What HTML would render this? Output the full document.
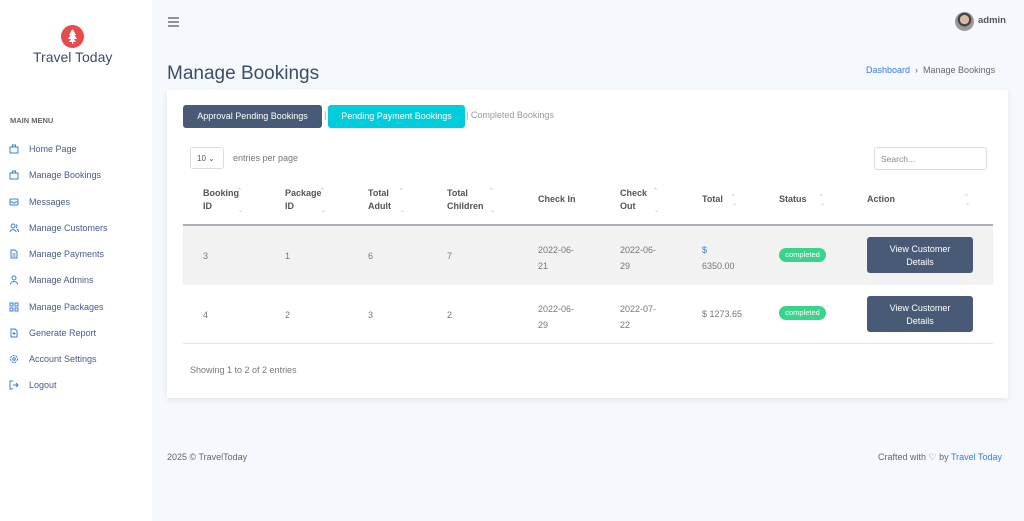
<!DOCTYPE html>
<html><head><meta charset="utf-8"><style>
*{margin:0;padding:0;box-sizing:border-box}
body{width:1024px;height:521px;overflow:hidden;background:#f5f8fd;font-family:"Liberation Sans",sans-serif;position:relative;color:#6c757d}
.a{position:absolute;white-space:nowrap}
#sb{position:absolute;left:0;top:0;width:152px;height:521px;background:#fff}
.mi{position:absolute;left:9px;font-size:9px;color:#4a5a8a}
.mi svg{position:absolute;left:0;top:0}
.mi span{position:absolute;left:20px;top:0}
.th{font-size:9px;color:#555;font-weight:bold;line-height:13px}
.td{font-size:9px;color:#777}
.btn{background:#485a76;color:#fff;font-size:9px;text-align:center;border-radius:3px;line-height:13px;padding-top:6px}
.badge{background:#3ad38c;color:#fff;font-size:7.5px;border-radius:7px;width:47px;height:14px;text-align:center;line-height:14px}
.s{position:absolute;font-size:6px;color:#bbb;line-height:6px}
</style></head><body>
<div id="sb">
 <div class="a" style="left:61px;top:25px;width:23px;height:23px;border-radius:50%;background:#e84b4b"></div>
 <svg class="a" style="left:66px;top:28px" width="13" height="17" viewBox="0 0 13 17"><path d="M6.5 1 L10 7 H8.5 L11 11 H8 L10 14 H3 L5 11 H2 L4.5 7 H3 Z" fill="#fff"/><rect x="6" y="13" width="1.2" height="3" fill="#fff"/></svg>
 <div class="a" style="left:33px;top:49px;font-size:14px;color:#3d4d66">Travel Today</div>
 <div class="a" style="left:10px;top:116px;font-size:7.5px;color:#666;font-weight:bold">MAIN MENU</div>
 <div class="mi a" style="top:144px"><svg width="10" height="10"><rect x="1" y="3" width="8" height="6" fill="none" stroke="#3b7ddd"/><rect x="3.5" y="1" width="3" height="2" fill="none" stroke="#3b7ddd"/></svg><span>Home Page</span></div>
 <div class="mi a" style="top:170px"><svg width="10" height="10"><rect x="1" y="3" width="8" height="6" fill="none" stroke="#3b7ddd"/><rect x="3.5" y="1" width="3" height="2" fill="none" stroke="#3b7ddd"/></svg><span>Manage Bookings</span></div>
 <div class="mi a" style="top:197px"><svg width="10" height="10"><rect x="1" y="2" width="8" height="6" rx="1" fill="none" stroke="#3b7ddd"/><path d="M1 5h2.5l1 1h1l1-1H9" fill="none" stroke="#3b7ddd"/></svg><span>Messages</span></div>
 <div class="mi a" style="top:223px"><svg width="10" height="10"><circle cx="4" cy="3" r="2" fill="none" stroke="#3b7ddd"/><path d="M1 9c0-3 6-3 6 0M7 1.5a2 2 0 010 3.5M8 6c1 .5 1.5 1.5 1.5 3" fill="none" stroke="#3b7ddd"/></svg><span>Manage Customers</span></div>
 <div class="mi a" style="top:249px"><svg width="10" height="10"><path d="M2 1h4l2 2v6H2z M3.5 5h3M3.5 7h3" fill="none" stroke="#3b7ddd"/></svg><span>Manage Payments</span></div>
 <div class="mi a" style="top:275px"><svg width="10" height="10"><circle cx="5" cy="3" r="2" fill="none" stroke="#3b7ddd"/><path d="M1.5 9.5c0-4 7-4 7 0" fill="none" stroke="#3b7ddd"/></svg><span>Manage Admins</span></div>
 <div class="mi a" style="top:302px"><svg width="10" height="10"><rect x="1" y="1" width="3" height="3" fill="none" stroke="#3b7ddd"/><rect x="6" y="1" width="3" height="3" fill="none" stroke="#3b7ddd"/><rect x="1" y="6" width="3" height="3" fill="none" stroke="#3b7ddd"/><rect x="6" y="6" width="3" height="3" fill="none" stroke="#3b7ddd"/></svg><span>Manage Packages</span></div>
 <div class="mi a" style="top:328px"><svg width="10" height="10"><path d="M2 1h4l2 2v6H2z M5 4v3M3.5 5.5h3" fill="none" stroke="#3b7ddd"/></svg><span>Generate Report</span></div>
 <div class="mi a" style="top:354px"><svg width="10" height="10"><circle cx="5" cy="5" r="3.5" fill="none" stroke="#3b7ddd" stroke-dasharray="2 1"/><circle cx="5" cy="5" r="1.3" fill="none" stroke="#3b7ddd"/></svg><span>Account Settings</span></div>
 <div class="mi a" style="top:380px"><svg width="10" height="10"><path d="M4 1H1v8h3M4 5h5M7 3l2 2-2 2" fill="none" stroke="#3b7ddd"/></svg><span>Logout</span></div>
</div>
<svg class="a" style="left:168px;top:17px" width="12" height="10"><path d="M0 1h11M0 5h11M0 9h11" stroke="#555" stroke-width="1.2"/></svg>
<div class="a" style="left:955px;top:12px;width:19px;height:19px;border-radius:50%;background:radial-gradient(circle at 50% 40%,#d8b8a0 0 30%,#444 32% 45%,#999 47%)"></div>
<div class="a" style="left:978px;top:15px;font-size:9.5px;font-weight:bold;color:#555">admin</div>
<div class="a" style="left:167px;top:63px;font-size:19px;color:#3d4d66">Manage Bookings</div>
<div class="a" style="left:866px;top:65px;font-size:9px;color:#3b7ddd">Dashboard <span style="color:#666">&nbsp;›&nbsp; Manage Bookings</span></div>
<div class="a" style="left:167px;top:90px;width:841px;height:308px;background:#fff;box-shadow:0 2px 6px rgba(0,0,0,.08)"></div>
<div class="a btn" style="left:183px;top:105px;width:139px;height:23px;padding-top:5px">Approval Pending Bookings</div>
<div class="a" style="left:324px;top:110px;font-size:9px;color:#999">|</div>
<div class="a btn" style="left:328px;top:105px;width:137px;height:23px;padding-top:5px;background:#00ccdb">Pending Payment Bookings</div>
<div class="a" style="left:466px;top:110px;font-size:9px;color:#999">| Completed Bookings</div>
<div class="a" style="left:190px;top:147px;width:34px;height:22px;border:1px solid #ddd;border-radius:3px;font-size:8px;color:#555;padding:6px 0 0 6px">10 ⌄</div>
<div class="a" style="left:233px;top:153px;font-size:9px;color:#777">entries per page</div>
<div class="a" style="left:874px;top:147px;width:113px;height:23px;border:1px solid #ddd;border-radius:3px;font-size:8.5px;color:#888;padding:6px 0 0 6px">Search...</div>
<div class="a th" style="left:203px;top:187px">Booking<br>ID</div>
<div class="a th" style="left:285px;top:187px">Package<br>ID</div>
<div class="a th" style="left:368px;top:187px">Total<br>Adult</div>
<div class="a th" style="left:447px;top:187px">Total<br>Children</div>
<div class="a th" style="left:538px;top:193px">Check In</div>
<div class="a th" style="left:620px;top:187px">Check<br>Out</div>
<div class="a th" style="left:702px;top:193px">Total</div>
<div class="a th" style="left:779px;top:193px">Status</div>
<div class="a th" style="left:867px;top:193px">Action</div>
<div class="s" style="left:238px;top:188px">^</div><div class="s" style="left:238px;top:208px">⌄</div>
<div class="s" style="left:321px;top:188px">^</div><div class="s" style="left:321px;top:208px">⌄</div>
<div class="s" style="left:400px;top:188px">^</div><div class="s" style="left:400px;top:208px">⌄</div>
<div class="s" style="left:490px;top:188px">^</div><div class="s" style="left:490px;top:208px">⌄</div>
<div class="s" style="left:572px;top:194px">^</div><div class="s" style="left:572px;top:199px">⌄</div>
<div class="s" style="left:654px;top:188px">^</div><div class="s" style="left:654px;top:208px">⌄</div>
<div class="s" style="left:732px;top:194px">^</div><div class="s" style="left:732px;top:201px">⌄</div>
<div class="s" style="left:820px;top:194px">^</div><div class="s" style="left:820px;top:201px">⌄</div>
<div class="s" style="left:965px;top:194px">^</div><div class="s" style="left:965px;top:201px">⌄</div>
<div class="a" style="left:183px;top:224px;width:810px;height:2px;background:#aab0b8"></div>
<div class="a" style="left:183px;top:226px;width:810px;height:59px;background:#f2f2f2"></div>
<div class="a" style="left:183px;top:343px;width:810px;height:1px;background:#e5e5e5"></div>
<div class="a td" style="left:203px;top:251px">3</div><div class="a td" style="left:285px;top:251px">1</div><div class="a td" style="left:368px;top:251px">6</div><div class="a td" style="left:447px;top:251px">7</div>
<div class="a td" style="left:538px;top:242px;line-height:16px">2022-06-<br>21</div><div class="a td" style="left:620px;top:242px;line-height:16px">2022-06-<br>29</div>
<div class="a td" style="left:702px;top:242px;line-height:16px"><span style="color:#3b7ddd">$</span><br>6350.00</div>
<div class="a badge" style="left:779px;top:248px">completed</div>
<div class="a btn" style="left:867px;top:237px;width:106px;height:36px">View Customer<br>Details</div>
<div class="a td" style="left:203px;top:310px">4</div><div class="a td" style="left:285px;top:310px">2</div><div class="a td" style="left:368px;top:310px">3</div><div class="a td" style="left:447px;top:310px">2</div>
<div class="a td" style="left:538px;top:301px;line-height:16px">2022-06-<br>29</div><div class="a td" style="left:620px;top:301px;line-height:16px">2022-07-<br>22</div>
<div class="a td" style="left:702px;top:309px">$ 1273.65</div>
<div class="a badge" style="left:779px;top:306px">completed</div>
<div class="a btn" style="left:867px;top:296px;width:106px;height:36px">View Customer<br>Details</div>
<div class="a td" style="left:190px;top:365px">Showing 1 to 2 of 2 entries</div>
<div class="a" style="left:167px;top:452px;font-size:9px;color:#666">2025 © TravelToday</div>
<div class="a" style="left:878px;top:452px;font-size:9px;color:#666">Crafted with <span style="color:#e84b4b">♡</span> by <span style="color:#3b7ddd">Travel Today</span></div>
</body></html>
